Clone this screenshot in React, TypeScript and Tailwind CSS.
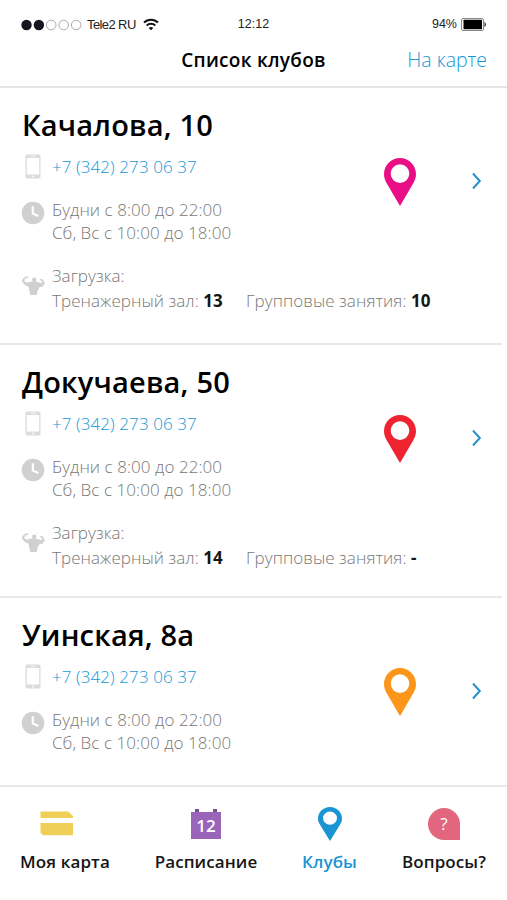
import React from 'react';

interface Club {
    id: number;
    name: string;
    phone: string;
    weekdays: string;
    weekend: string;
    gym?: string;
    group?: string;
    pinClass: string;
    cardClass: string;
}

const CLUBS: Club[] = [
    {
        id: 1,
        name: 'Качалова, 10',
        phone: '+7 (342) 273 06 37',
        weekdays: 'Будни с 8:00 до 22:00',
        weekend: 'Сб, Вс с 10:00 до 18:00',
        gym: '13',
        group: '10',
        pinClass: 'text-[#e90e86]',
        cardClass: 'h-[257px] border-b-2',
    },
    {
        id: 2,
        name: 'Докучаева, 50',
        phone: '+7 (342) 273 06 37',
        weekdays: 'Будни с 8:00 до 22:00',
        weekend: 'Сб, Вс с 10:00 до 18:00',
        gym: '14',
        group: '-',
        pinClass: 'text-[#ee2430]',
        cardClass: 'h-[253px] border-b-2',
    },
    {
        id: 3,
        name: 'Уинская, 8а',
        phone: '+7 (342) 273 06 37',
        weekdays: 'Будни с 8:00 до 22:00',
        weekend: 'Сб, Вс с 10:00 до 18:00',
        pinClass: 'text-[#fb961b]',
        cardClass: 'h-[187px]',
    },
];

const PinIcon: React.FC<{ className?: string }> = ({ className }) => (
    <svg viewBox="0 0 32 48" preserveAspectRatio="none" fill="currentColor" className={className}>
        <path
            fillRule="evenodd"
            d="M16 0C7.2 0 0 7.2 0 16c0 3.4 1 6.400 2.700 9.200L16 48l13.300-22.800C31 22.400 32 19.400 32 16 32 7.200 24.800 0 16 0Zm0 6.300a9.300 9.300 0 1 1 0 18.600 9.300 9.300 0 0 1 0-18.600Z"
        />
    </svg>
);

const PhoneIcon = () => (
    <svg viewBox="0 0 16 25" className="w-4 h-[25px]">
        <rect x="0.500" y="0.500" width="15" height="24" rx="1.800" fill="#dcdcdc" />
        <rect x="1.800" y="4" width="12.400" height="16.500" fill="#fff" />
        <path d="M5.500 2.200h5" stroke="#fff" strokeWidth="0.800" />
        <circle cx="8" cy="22.500" r="0.900" fill="#fff" />
    </svg>
);

const ClockIcon = () => (
    <svg viewBox="0 0 24 24" className="w-6 h-6 shrink-0">
        <circle cx="12" cy="12" r="11.300" fill="#d0d0d0" />
        <path d="M11.800 5.200v7.300l5.600 2.600" fill="none" stroke="#fff" strokeWidth="2.200" />
    </svg>
);

const MuscleIcon = () => (
    <svg viewBox="0 0 24 20" className="w-6 h-5 shrink-0" fill="#d0d0d0">
        <circle cx="13.200" cy="3.700" r="2.200" />
        <path d="M8 .8 6.200.2 3 1.600.9 4.200l.7 2.200 2.600 2.800 3.200 1.300.8 3.700 1 4.800h6.600l.7-4.200 2-3.600 3.200-.8 1.900-2.300-.4-2.500-1.900-2.300-2-.6-.4 1.400 1.500.7.8 1.900-1.600.4-2.700-1-3.700-.5-4.300.2-2.500 1-2.500-1.100-.6-1.400 1.200-1.900 2.300-.7Z" />
    </svg>
);

const ChevronIcon = () => (
    <svg viewBox="0 0 10 18" className="w-2.5 h-[18px]" fill="none" stroke="#2790c8" strokeWidth="2">
        <path d="m1 1.500 6.800 7.500L1 16.500" />
    </svg>
);

const StatusBar = () => (
    <div className="flex items-center h-[49px] px-5 font-['Liberation_Sans',sans-serif] text-[13px] text-[#222]">
        <div className="flex flex-1 items-center">
            <svg viewBox="0 0 62 12" className="w-[62px] h-3 mr-[5px]">
                <circle cx="6.500" cy="6" r="5.200" fill="#15171e" />
                <circle cx="18.900" cy="6" r="5.200" fill="#15171e" />
                <circle cx="31.200" cy="6" r="4.800" fill="#fff" stroke="#888" strokeWidth="0.700" />
                <circle cx="43.700" cy="6" r="4.800" fill="#fff" stroke="#888" strokeWidth="0.700" />
                <circle cx="56.200" cy="6" r="4.800" fill="#fff" stroke="#888" strokeWidth="0.700" />
            </svg>
            <span className="tracking-[-0.600px]">Tele2 RU</span>
            <svg viewBox="0 0 16 13" className="w-4 h-[13px] ml-[7px]" fill="none" stroke="#111" strokeWidth="2">
                <path d="M1 4.500a10 10 0 0 1 14 0M3.700 7.500a6.200 6.200 0 0 1 8.600 0" />
                <path d="M8 12.300 5.700 10a3.300 3.300 0 0 1 4.600 0Z" fill="#111" stroke="none" />
            </svg>
        </div>
        <span className="text-[12.500px]">12:12</span>
        <div className="flex flex-1 items-center justify-end">
            <span className="text-[12.500px]">94%</span>
            <svg viewBox="0 0 26 13" className="w-[26px] h-[13px] ml-1">
                <rect x="0.500" y="0.500" width="22" height="12" rx="1.500" fill="#fff" stroke="#888" />
                <rect x="2.500" y="1.700" width="18.500" height="9.600" rx="0.500" fill="#000" />
                <path d="M23.500 4c1.800.5 1.800 4.500 0 5Z" fill="#222" />
            </svg>
        </div>
    </div>
);

const ClubCard: React.FC<{ club: Club }> = ({ club }) => (
    <div className={`mr-[5px] border-[#e8e8e8] pt-[17px] pl-[22px] ${club.cardClass}`}>
        <div className="flex">
            <div className="w-[358px]">
                <h2 className="h-10 text-[29px] leading-10 tracking-[0.200px] font-semibold text-black whitespace-nowrap">{club.name}</h2>
                <div className="flex items-center mt-2 h-[26px]">
                    <div className="flex w-[22px] justify-center">
                        <PhoneIcon />
                    </div>
                    <a className="ml-2 text-[17px] leading-[28px] pt-px tracking-[0.080px] font-light text-[#1598d8]">{club.phone}</a>
                </div>
                <div className="flex mt-[19px]">
                    <div className="w-[22px] mt-[3px] flex justify-center shrink-0">
                        <ClockIcon />
                    </div>
                    <div className="ml-2 text-[17px] leading-[23px] tracking-[0.060px] font-light text-[#777]">
                        <p>{club.weekdays}</p>
                        <p>{club.weekend}</p>
                    </div>
                </div>
            </div>
            <div className="flex h-[50px] flex-1 items-start justify-between mt-[53px] pl-1 pr-5">
                <PinIcon className={`w-8 h-12 ${club.pinClass}`} />
                <div className="mt-3.5">
                    <ChevronIcon />
                </div>
            </div>
        </div>
        {club.gym && (
            <div className="flex mt-[19px]">
                <div className="w-[22px] mt-[13px] flex justify-center shrink-0">
                    <MuscleIcon />
                </div>
                <div className="ml-2 text-[17px] leading-[25px] tracking-[0.060px] font-light text-[#777] whitespace-nowrap">
                    <p>Загрузка:</p>
                    <div className="flex">
                        <p className="w-[194px]">
                            Тренажерный зал: <b className="font-bold text-[#151515]">{club.gym}</b>
                        </p>
                        <p>
                            Групповые занятия: <b className="font-bold text-[#151515]">{club.group}</b>
                        </p>
                    </div>
                </div>
            </div>
        )}
    </div>
);

const TabBar = () => (
    <nav className="flex h-[115px] border-t-2 border-[#e8e8e8] pt-5 text-[17px] tracking-[0.100px] font-semibold text-[#151515] whitespace-nowrap">
        <div className="flex w-[130px] flex-col items-center">
            <svg viewBox="0 0 34 34" className="w-[34px] h-[34px] ml-[-16px]" fill="#efcf57">
                <path d="M0.500 4.500h27.500l5 4.500v2h-32.500zM0.500 16h32.500v12.300h-30l-2.500-2.500z" />
            </svg>
            <span className="mt-2">Моя карта</span>
        </div>
        <div className="flex w-[152px] flex-col items-center">
            <div className="flex h-[34px] w-[30px] flex-col pt-0.5">
                <div className="flex h-[3px] justify-between px-1">
                    <div className="w-1 bg-[#765294]"></div>
                    <div className="w-1 bg-[#765294]"></div>
                </div>
                <div className="h-[27px] bg-[#9a64b9] text-center text-[17px] leading-[27px] font-semibold text-white">12</div>
            </div>
            <span className="mt-2">Расписание</span>
        </div>
        <div className="flex w-[95px] flex-col items-center text-[#1b94d3]">
            <PinIcon className="h-[34px] w-6" />
            <span className="mt-2">Клубы</span>
        </div>
        <div className="ml-1 flex w-[126px] flex-col items-center">
            <div className="flex h-[34px] items-center">
                <div className="flex h-8 w-8 items-center justify-center rounded-full rounded-br-none bg-[#e2667d] text-[17px] font-normal text-white">?</div>
            </div>
            <span className="mt-2">Вопросы?</span>
        </div>
    </nav>
);

const App: React.FC = () => {
    return (
        <div className="w-[507px] h-[900px] overflow-hidden bg-white font-['Open_Sans',sans-serif]">
            <StatusBar />
            <header className="flex h-[39px] items-start border-b-2 border-[#e5e5e5] px-5">
                <div className="flex-1"></div>
                <h1 className="text-[19px] leading-[22px] tracking-[0.270px] font-semibold text-black">Список клубов</h1>
                <div className="flex-1 text-right text-[19.500px] leading-[22px] font-light text-[#1598d8]">На карте</div>
            </header>
            <main>
                {CLUBS.map(club => (
                    <ClubCard key={club.id} club={club} />
                ))}
            </main>
            <TabBar />
        </div>
    );
};

export default App;
